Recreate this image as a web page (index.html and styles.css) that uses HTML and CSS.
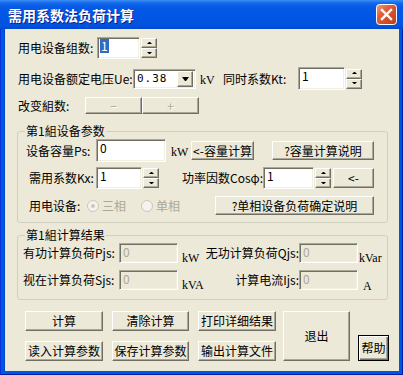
FILE: index.html
```html
<!DOCTYPE html>
<html lang="zh-CN">
<head>
<meta charset="utf-8">
<title>需用系数法负荷计算</title>
<link rel="stylesheet" href="styles.css">
</head>
<body>
<div class="window">
  <div class="titlebar">
    <span class="title">需用系数法负荷计算</span>
    <div class="close">
      <svg width="21" height="21" viewBox="0 0 21 21">
        <defs>
          <linearGradient id="cg" x1="0" y1="0" x2="1" y2="1">
            <stop offset="0" stop-color="#F0A088"/>
            <stop offset="0.35" stop-color="#E0603C"/>
            <stop offset="1" stop-color="#C23A17"/>
          </linearGradient>
        </defs>
        <rect x="0.5" y="0.5" width="20" height="20" rx="3" fill="url(#cg)" stroke="#FFFFFF"/>
        <path d="M6 6 L15 15 M15 6 L6 15" stroke="#FFFFFF" stroke-width="2.4" stroke-linecap="square"/>
      </svg>
    </div>
  </div>
  <div class="client">
    <div class="trow r1">
      <span class="lbl w79">用电设备组数:</span>
      <div class="edit w43 h22"><span class="sel">1</span></div>
      <div class="spin"><span class="sb up"></span><span class="sb dn"></span></div>
    </div>
    <div class="trow r2">
      <span class="lbl w115">用电设备额定电压Ue:</span>
      <div class="combo"><span class="cval">0.38</span><span class="cbtn"></span></div>
      <span class="unit u-kv">kV</span>
      <span class="lbl w75">同时系数Kt:</span>
      <div class="edit w47 h23"><span>1</span></div>
      <div class="spin"><span class="sb up"></span><span class="sb dn"></span></div>
    </div>
    <div class="trow r3">
      <span class="lbl w67">改变組数:</span>
      <div class="btn dis w57 h17">−</div>
      <div class="btn dis w57 h17">+</div>
    </div>

    <fieldset class="group g1">
      <legend>第1組设备参数</legend>
      <div class="grow g1r1">
        <span class="lbl w70">设备容量Ps:</span>
        <div class="edit w70 h23"><span>0</span></div>
        <span class="unit u-kw">kW</span>
        <div class="btn w63 h19">&lt;-容量计算</div>
        <div class="btn w102 h19 ml18">?容量计算说明</div>
      </div>
      <div class="grow g1r2">
        <span class="lbl w67">需用系数Kx:</span>
        <div class="edit w46 h22"><span>1</span></div>
        <div class="spin"><span class="sb up"></span><span class="sb dn"></span></div>
        <span class="lbl w104 right">功率因数Cosφ:</span>
        <div class="edit w51 h22"><span>1</span></div>
        <div class="spin"><span class="sb up"></span><span class="sb dn"></span></div>
        <div class="btn w41 h20 ml2">&lt;-</div>
      </div>
      <div class="grow g1r3">
        <span class="lbl w58">用电设备:</span>
        <span class="radio w54"><span class="dot on"></span><span class="rtext">三相</span></span>
        <span class="radio w74"><span class="dot"></span><span class="rtext">单相</span></span>
        <div class="btn w159 h19">?单相设备负荷确定说明</div>
      </div>
    </fieldset>

    <fieldset class="group g2">
      <legend>第1組计算结果</legend>
      <div class="grow g2r1">
        <span class="lbl w96">有功计算负荷Pjs:</span>
        <div class="edit off w59 h20"><span>0</span></div>
        <span class="unit u-r">kW</span>
        <span class="lbl w95 right">无功计算负荷Qjs:</span>
        <div class="edit off w59 h20"><span>0</span></div>
        <span class="unit u-r2">kVar</span>
      </div>
      <div class="grow g2r2">
        <span class="lbl w96">视在计算负荷Sjs:</span>
        <div class="edit off w59 h20"><span>0</span></div>
        <span class="unit u-r">kVA</span>
        <span class="lbl w95 right">计算电流Ijs:</span>
        <div class="edit off w59 h20"><span>0</span></div>
        <span class="unit u-r3">A</span>
      </div>
    </fieldset>

    <div class="actions">
      <div class="btngrid">
        <div class="btn">计算</div>
        <div class="btn">清除计算</div>
        <div class="btn">打印详细结果</div>
        <div class="btn">读入计算参数</div>
        <div class="btn">保存计算参数</div>
        <div class="btn">输出计算文件</div>
      </div>
      <div class="btn exit">退出</div>
      <div class="btn help">帮助</div>
    </div>
  </div>
</div>
</body>
</html>
```

FILE: styles.css
```css
* { box-sizing: border-box; }
html, body { margin: 0; padding: 0; }
body {
  width: 403px;
  height: 375px;
  overflow: hidden;
  font-family: "Noto Sans CJK SC", sans-serif;
  font-size: 12px;
  line-height: 14px;
  color: #000;
  background: #0055E5;
}
.window {
  width: 403px;
  height: 375px;
  display: flex;
  flex-direction: column;
  background: #0055E5;
  border-left: 1px solid #0831D9;
  border-right: 1px solid #001EA0;
  border-bottom: 1px solid #001EA0;
}
.titlebar {
  height: 29px;
  flex: none;
  display: flex;
  align-items: center;
  padding-left: 7px;
  margin: 0 -1px;
  padding-right: 6px;
  background: linear-gradient(to bottom, #3D8FF5 0px, #1468EA 3px, #0459E6 7px, #0055E3 18px, #0253DE 26px, #0046CC 29px);
}
.title {
  color: #fff;
  font-weight: bold;
  font-size: 14px;
  line-height: 16px;
  text-shadow: 1px 1px 0 #0A1E8C;
  padding-left: 1px;
}
.close {
  margin-left: auto;
  width: 21px;
  height: 21px;
  align-self: flex-start;
  margin-top: 4px;
}
.close svg { display: block; }
.client {
  flex: 1;
  margin: 0 3px 3px 3px;
  background: #ECE9D8;
  display: flex;
  flex-direction: column;
  border-left: 1px solid #0046CC;
}

/* rows */
.trow, .grow { display: flex; align-items: center; flex: none; }
.trow { padding-left: 13px; }
.r1 { margin-top: 8px; height: 22px; }
.r2 { margin-top: 8px; height: 23px; }
.r3 { margin-top: 7px; height: 17px; }

.lbl { flex: none; white-space: nowrap; }
.right { text-align: right; }
.w41 { width: 41px; } .w43 { width: 43px; } .w46 { width: 46px; } .w47 { width: 47px; }
.w51 { width: 51px; } .w54 { width: 54px; } .w57 { width: 57px; } .w58 { width: 58px; }
.w59 { width: 59px; } .w63 { width: 63px; } .w67 { width: 67px; } .w70 { width: 70px; }
.w74 { width: 74px; } .w75 { width: 75px; } .w79 { width: 79px; } .w95 { width: 95px; }
.w96 { width: 96px; } .w102 { width: 102px; } .w104 { width: 104px; } .w115 { width: 115px; }
.w159 { width: 159px; }
.h17 { height: 17px; } .h19 { height: 19px; } .h20 { height: 20px; } .h22 { height: 22px; } .h23 { height: 23px; }
.ml2 { margin-left: 2px; } .ml18 { margin-left: 18px; }

/* edit */
.edit {
  flex: none;
  background: #fff;
  border: 1px solid;
  border-color: #ACA899 #FFFFFF #FFFFFF #ACA899;
  box-shadow: inset 1px 1px 0 #716F64, inset -1px -1px 0 #F1EFE2;
  padding: 1px 2px 0 3px;
  align-self: center;
  line-height: 14px;
}
.edit.off { background: #ECE9D8; color: #ACA899; }
.sel { background: #316AC5; color: #fff; display: inline-block; padding: 0 1px; margin-left: -1px; }

/* spinner */
.spin {
  flex: none;
  width: 16px;
  height: 20px;
  margin-left: 1px;
  display: flex;
  flex-direction: column;
}
.sb {
  height: 10px;
  background: #ECE9D8;
  border: 1px solid;
  border-color: #FFFFFF #716F64 #716F64 #FFFFFF;
  box-shadow: inset -1px -1px 0 #ACA899;
  display: flex;
  align-items: center;
  justify-content: center;
}
.sb::after {
  content: "";
  width: 1px;
  height: 0;
  border-left: 2px solid transparent;
  border-right: 2px solid transparent;
}
.sb.up::after { border-bottom: 2px solid #000; margin-top: -1px; }
.sb.dn::after { border-top: 2px solid #000; margin-top: -1px; }

/* combo */
.combo {
  flex: none;
  width: 63px;
  height: 20px;
  background: #fff;
  border: 1px solid;
  border-color: #ACA899 #FFFFFF #FFFFFF #ACA899;
  box-shadow: inset 1px 1px 0 #716F64, inset -1px -1px 0 #F1EFE2;
  display: flex;
  align-items: center;
  padding: 0 2px 0 3px;
}
.cval { flex: 1; letter-spacing: 1px; font-family: "DejaVu Sans Mono", monospace; font-size: 11px; }
.cbtn {
  width: 16px;
  height: 16px;
  background: #ECE9D8;
  border: 1px solid;
  border-color: #FFFFFF #716F64 #716F64 #FFFFFF;
  box-shadow: inset -1px -1px 0 #ACA899;
  display: flex;
  align-items: center;
  justify-content: center;
}
.cbtn::after {
  content: "";
  width: 1px;
  height: 0;
  border-left: 3px solid transparent;
  border-right: 3px solid transparent;
  border-top: 4px solid #000;
}
.unit { flex: none; font-family: "Liberation Serif", "Noto Sans CJK SC", serif; font-size: 12px; }
.u-kv { margin-left: 4px; width: 23px; padding-top: 3px; }
.u-kw { margin-left: 5px; width: 20px; padding-top: 3px; }
.u-r { margin-left: 4px; width: 22px; align-self: flex-end; margin-bottom: -2px; }
.u-r2 { margin-left: 1px; align-self: flex-end; margin-bottom: -2px; }
.u-r3 { margin-left: 5px; align-self: flex-end; margin-bottom: -3px; }

/* buttons */
.btn {
  flex: none;
  display: flex;
  align-items: center;
  justify-content: center;
  white-space: nowrap;
  background: #ECE9D8;
  border: 1px solid;
  border-color: #FFFFFF #716F64 #716F64 #FFFFFF;
  box-shadow: inset -1px -1px 0 #ACA899;
  line-height: 14px;
}
.btn.dis { color: #ACA899; text-shadow: 1px 1px 0 #fff; }

/* group boxes */
.group {
  flex: none;
  margin: 10px 0 0 12px;
  width: 371px;
  min-width: 0;
  padding: 0 0 7px 0;
  border: 1px solid #D0D0BF;
  border-radius: 3px;
}
.group legend {
  margin-left: 7px;
  padding: 0 1px;
  line-height: 14px;
}
.g2 { margin-top: 5px; padding-bottom: 9px; }
.g1r1 { margin-top: 1px; height: 23px; padding-left: 8px; }
.g1r2 { margin-top: 5px; height: 22px; padding-left: 11px; }
.g1r3 { margin-top: 7px; height: 19px; padding-left: 11px; }
.g2r1 { margin-top: 1px; height: 20px; padding-left: 5px; }
.g2r2 { margin-top: 7px; height: 20px; padding-left: 5px; }

/* radio */
.radio { flex: none; display: flex; align-items: center; color: #ACA899; }
.dot {
  width: 12px;
  height: 12px;
  border-radius: 50%;
  border: 1px solid #CAC8BB;
  background: #F4F3EE;
  display: flex;
  align-items: center;
  justify-content: center;
  margin-right: 3px;
}
.dot.on::after { content: ""; width: 4px; height: 4px; border-radius: 50%; background: #CAC8BB; }

/* actions */
.actions {
  flex: none;
  display: flex;
  margin: 11px 0 0 20px;
}
.btngrid {
  display: grid;
  grid-template-columns: 78px 77px 78px;
  grid-auto-rows: 20px;
  column-gap: 9px;
  row-gap: 10px;
}
.exit { width: 67px; height: 50px; margin-left: 7px; }
.help {
  width: 31px;
  height: 26px;
  margin-left: 8px;
  align-self: flex-end;
  border: 1px solid #000;
  box-shadow: inset 1px 1px 0 #FFFFFF, inset -1px -1px 0 #716F64, inset -2px -2px 0 #ACA899;
}
```
